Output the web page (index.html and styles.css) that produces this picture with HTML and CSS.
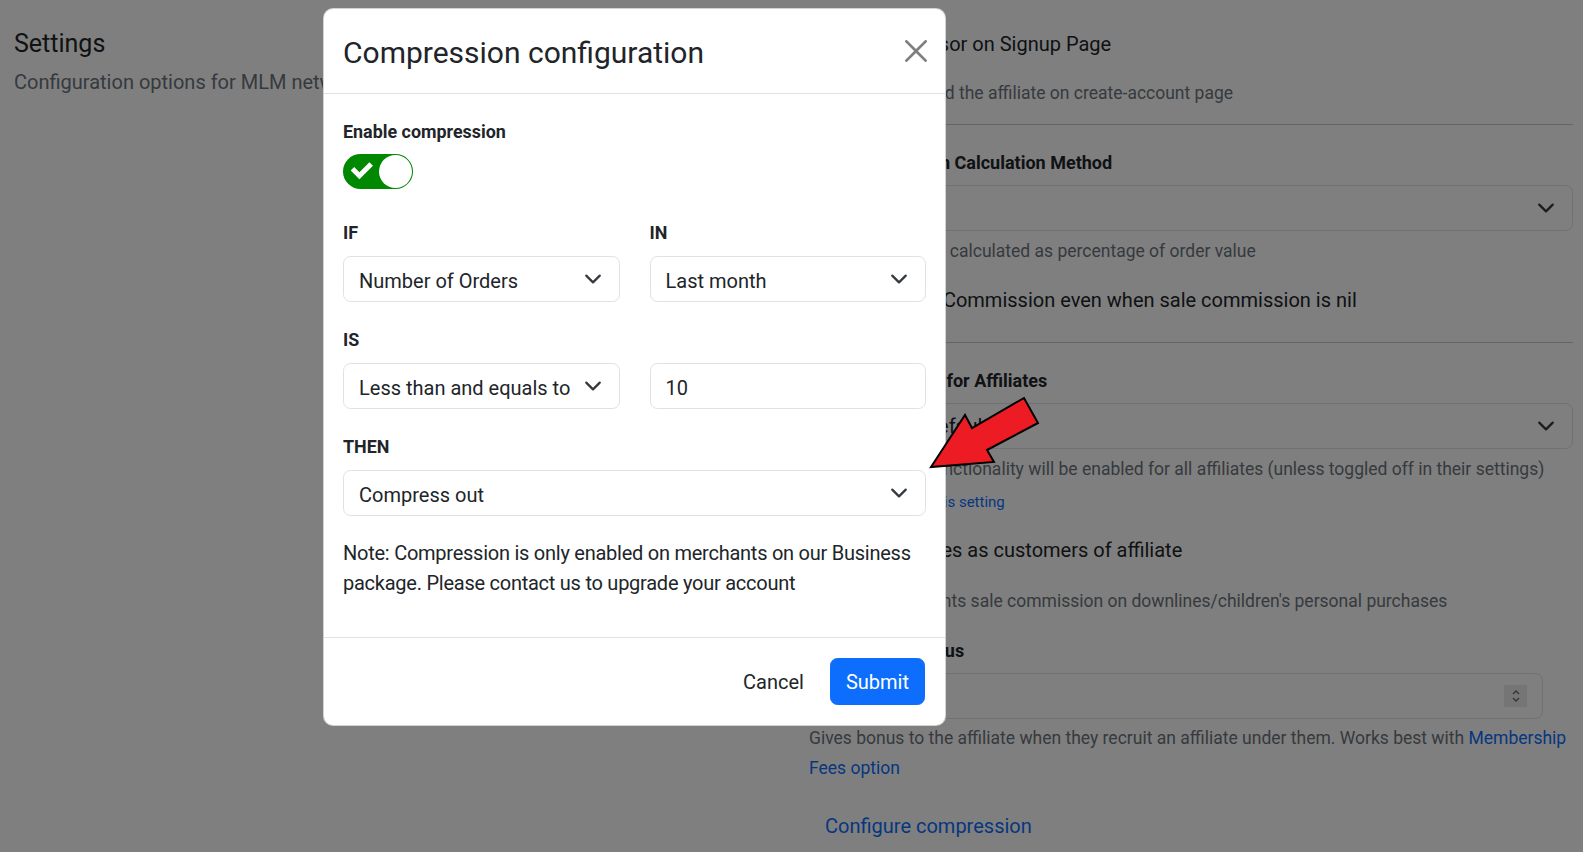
FILE: index.html
```html
<!DOCTYPE html>
<html lang="en">
<head>
<meta charset="utf-8">
<title>Settings</title>
<link rel="stylesheet" href="styles.css">
</head>
<body>
<div class="page">
  <aside class="intro">
    <h1 class="page-title">Settings</h1>
    <p class="page-desc">Configuration options for MLM network</p>
  </aside>
  <main class="settings">
    <div class="opt-row"><span class="check-box"></span><span>Show Sponsor on Signup Page</span></div>
    <p class="help s2">Show who referred the affiliate on create-account page</p>
    <hr class="sep s3">
    <div class="field-label s4">Sale Commission Calculation Method</div>
    <div class="bg-select s5">
      <span>Percentage</span>
      <svg class="chev" viewBox="0 0 16 16"><path d="m2 5 6 6 6-6"/></svg>
    </div>
    <p class="help s6">Commission gets calculated as percentage of order value</p>
    <div class="opt-row s7"><span class="check-box"></span><span>Pay Signup Commission even when sale commission is nil</span></div>
    <hr class="sep s8">
    <div class="field-label s9">Default Visibility for Affiliates</div>
    <div class="bg-select s10">
      <span>Enabled by default</span>
      <svg class="chev" viewBox="0 0 16 16"><path d="m2 5 6 6 6-6"/></svg>
    </div>
    <p class="help s11">By default, this functionality will be enabled for all affiliates (unless toggled off in their settings)</p>
    <a class="small-link s12">Learn more about this setting</a>
    <div class="opt-row s13"><span class="check-box"></span><span>Treat all sales as customers of affiliate</span></div>
    <p class="help s14">Gives upline parents sale commission on downlines/children's personal purchases</p>
    <div class="field-label s15">Recruitment Bonus</div>
    <div class="num-input s16">
      <span>0</span>
      <span class="spinner">
        <svg viewBox="0 0 10 16"><path d="M2 6 5 3 8 6M2 10l3 3 3-3"/></svg>
      </span>
    </div>
    <p class="help help-lg s17">Gives bonus to the affiliate when they recruit an affiliate under them. Works best with <a class="inline-link">Membership Fees option</a></p>
    <div class="link-row s18"><a class="btn-link">Configure compression</a></div>
  </main>
</div>

<div class="backdrop"></div>

<div class="modal">
  <div class="modal-header">
    <h5 class="modal-title">Compression configuration</h5>
    <span class="close-btn">
      <svg viewBox="0 0 16 16"><path d="M.293.293a1 1 0 0 1 1.414 0L8 6.586 14.293.293a1 1 0 1 1 1.414 1.414L9.414 8l6.293 6.293a1 1 0 0 1-1.414 1.414L8 9.414l-6.293 6.293a1 1 0 0 1-1.414-1.414L6.586 8 .293 1.707a1 1 0 0 1 0-1.414z"/></svg>
    </span>
  </div>
  <div class="modal-body">
    <div class="m-label m-label-first">Enable compression</div>
    <div class="toggle-wrap">
      <span class="toggle">
        <span class="toggle-icon">
          <svg viewBox="-2 -5 17 21"><path d="M11.264 0L5.26 6.004 2.103 2.847 0 4.95l5.26 5.26 8.108-8.107L11.264 0"/></svg>
        </span>
        <span class="toggle-handle"></span>
      </span>
    </div>
    <div class="m-row">
      <div class="m-group">
        <div class="m-label">IF</div>
        <div class="m-select"><span class="m-value">Number of Orders</span><svg class="chev" viewBox="0 0 16 16"><path d="m2 5 6 6 6-6"/></svg></div>
      </div>
      <div class="m-group">
        <div class="m-label">IN</div>
        <div class="m-select"><span class="m-value">Last month</span><svg class="chev" viewBox="0 0 16 16"><path d="m2 5 6 6 6-6"/></svg></div>
      </div>
    </div>
    <div class="m-row">
      <div class="m-group">
        <div class="m-label">IS</div>
        <div class="m-select"><span class="m-value">Less than and equals to</span><svg class="chev" viewBox="0 0 16 16"><path d="m2 5 6 6 6-6"/></svg></div>
      </div>
      <div class="m-group">
        <div class="m-label m-label-blank">&nbsp;</div>
        <div class="m-input">10</div>
      </div>
    </div>
    <div class="m-group">
      <div class="m-label">THEN</div>
      <div class="m-select"><span class="m-value">Compress out</span><svg class="chev" viewBox="0 0 16 16"><path d="m2 5 6 6 6-6"/></svg></div>
    </div>
    <p class="m-note">Note: Compression is only enabled on merchants on our Business package. Please contact us to upgrade your account</p>
  </div>
  <div class="modal-footer">
    <button class="btn btn-cancel">Cancel</button>
    <button class="btn btn-primary">Submit</button>
  </div>
</div>

<svg class="annot-arrow" viewBox="920 390 125 85">
  <polygon points="931,467 965,415 972,428 1024,398 1038,423 987,450 994,462"/>
</svg>
</body>
</html>
```

FILE: styles.css
```css
* { box-sizing: border-box; }

html, body { margin: 0; padding: 0; }

body {
  position: relative;
  width: 1583px;
  height: 852px;
  overflow: hidden;
  background: #fff;
  color: #212529;
  font-family: "Segoe UI", Roboto, "Liberation Sans", sans-serif;
  font-size: 20px;
  line-height: 30px;
}

/* ---------- background page ---------- */
.page {
  display: grid;
  grid-template-columns: 795px 1fr;
  padding: 29px 10px 0 14px;
}

.page-title {
  margin: 0;
  font-size: 25px;
  font-weight: 400;
  line-height: 30px;
}

.page-desc {
  margin: 7.5px 0 0;
  color: #6c757d;
}

.settings { min-width: 0; }

.opt-row {
  display: flex;
  align-items: center;
  white-space: nowrap;
  height: 30px;
}

.check-box {
  flex: none;
  width: 20px;
  height: 20px;
  margin-right: 10px;
  border: 1px solid #dee2e6;
  border-radius: 5px;
}

.help {
  margin: 0;
  font-size: 17.5px;
  line-height: 26px;
  color: #6c757d;
  white-space: nowrap;
}

.help-lg {
  line-height: 30px;
  white-space: normal;
}

.sep {
  margin: 0;
  border: 0;
  border-top: 1px solid #c8c9ca;
}

.field-label {
  font-size: 18px;
  font-weight: 700;
  line-height: 26px;
  white-space: nowrap;
}

.bg-select {
  display: flex;
  align-items: center;
  justify-content: space-between;
  height: 46px;
  padding: 0 17px 0 15px;
  border: 1px solid #dee2e6;
  border-radius: 7.5px;
}

.chev {
  width: 18px;
  height: 18px;
  flex: none;
}

.chev path {
  fill: none;
  stroke: #343a40;
  stroke-width: 2;
  stroke-linecap: round;
  stroke-linejoin: round;
}

.small-link {
  display: block;
  font-size: 15px;
  line-height: 22.5px;
  color: #0d6efd;
}

.num-input {
  display: flex;
  align-items: center;
  justify-content: space-between;
  height: 46px;
  margin-right: 30px;
  padding: 0 15px;
  border: 1px solid #dee2e6;
  border-radius: 7.5px;
}

.spinner {
  display: flex;
  align-items: center;
  justify-content: center;
  width: 23px;
  height: 22px;
  background: #ebebeb;
}

.spinner svg { width: 10px; height: 16px; }

.spinner path {
  fill: none;
  stroke: #6b6b6b;
  stroke-width: 1.4;
}

.inline-link { color: #0d6efd; }

.btn-link {
  display: inline-block;
  padding: 7.5px 15px;
  border: 1px solid transparent;
  color: #0d6efd;
}

/* vertical rhythm of the settings column */
.s2 { margin-top: 20.8px; }
.s3 { margin-top: 18.7px; }
.s4 { margin-top: 24.8px; }
.s5 { margin-top: 9.2px; }
.s6 { margin-top: 6.3px; }
.s7 { margin-top: 21.7px; }
.s8 { margin-top: 26.5px; }
.s9 { margin-top: 24.9px; }
.s10 { margin-top: 9.1px; }
.s11 { margin-top: 6.8px; }
.s12 { margin-top: 9px; }
.s13 { margin-top: 22.2px; }
.s14 { margin-top: 22.5px; }
.s15 { margin-top: 24.3px; }
.s16 { margin-top: 8.7px; }
.s17 { margin-top: 4.5px; }
.s18 { margin-top: 19.5px; }

/* ---------- backdrop ---------- */
.backdrop {
  position: absolute;
  inset: 0;
  background: rgba(0, 0, 0, 0.5);
}

/* ---------- modal ---------- */
.modal {
  position: absolute;
  left: 323px;
  top: 8px;
  width: 623px;
  background: #fff;
  border: 1px solid rgba(0, 0, 0, 0.175);
  border-radius: 10px;
}

.modal-header {
  display: flex;
  align-items: flex-start;
  justify-content: space-between;
  height: 85px;
  padding: 21px 18px 0 19px;
  border-bottom: 1px solid #dee2e6;
}

.modal-title {
  margin: 0;
  font-size: 30px;
  font-weight: 400;
  line-height: 45px;
}

.close-btn {
  display: flex;
  width: 22px;
  height: 22px;
  margin-top: 9.5px;
}

.close-btn svg { width: 22px; height: 22px; }
.close-btn path { fill: #000; opacity: 0.5; }

.modal-body {
  padding: 25.4px 19px 19px;
}

.m-label {
  font-size: 17.9px;
  font-weight: 700;
  line-height: 26px;
  margin-bottom: 10px;
}

.m-label-first { margin-bottom: 9.1px; }

.toggle-wrap {
  height: 35px;
  margin-bottom: 30.9px;
}

.toggle {
  position: relative;
  display: block;
  width: 70px;
  height: 35px;
  border-radius: 17.5px;
  background: #008800;
}

.toggle-icon {
  position: absolute;
  left: 0;
  top: 0;
  width: 37px;
  height: 35px;
}

.toggle-icon svg { width: 37px; height: 35px; display: block; }
.toggle-icon path { fill: #fff; fill-rule: evenodd; }

.toggle-handle {
  position: absolute;
  top: 1px;
  right: 1px;
  width: 33px;
  height: 33px;
  border-radius: 50%;
  background: #fff;
}

.m-row {
  display: grid;
  grid-template-columns: 1fr 1fr;
  column-gap: 30px;
}

.m-group { margin-bottom: 25px; }

.m-select {
  display: flex;
  align-items: center;
  justify-content: space-between;
  height: 46px;
  padding: 0 17px 0 15px;
  border: 1px solid #dee2e6;
  border-radius: 7.5px;
  white-space: nowrap;
}

.m-value { padding-top: 4px; }

.m-input {
  height: 46px;
  padding: 9px 15px 0;
  border: 1px solid #dee2e6;
  border-radius: 7.5px;
}

.m-label-blank { visibility: hidden; }

.m-note {
  margin: -3.6px 0 20.2px;
  letter-spacing: -0.25px;
}

.modal-footer {
  display: flex;
  justify-content: flex-end;
  align-items: center;
  padding: 15px;
  border-top: 1px solid #dee2e6;
}

.btn {
  height: 47px;
  margin: 5px;
  padding: 2px 15px 0;
  border: 1px solid transparent;
  border-radius: 7.5px;
  font-family: inherit;
  font-size: 20px;
  line-height: 30px;
  background: transparent;
  color: #212529;
}

.btn-primary {
  background: #0d6efd;
  border-color: #0d6efd;
  color: #fff;
}

/* ---------- annotation arrow ---------- */
.annot-arrow {
  position: absolute;
  left: 920px;
  top: 390px;
  width: 125px;
  height: 85px;
  overflow: visible;
}

.annot-arrow polygon {
  fill: #ed1c24;
  stroke: #000;
  stroke-width: 2;
  stroke-linejoin: miter;
}
```
